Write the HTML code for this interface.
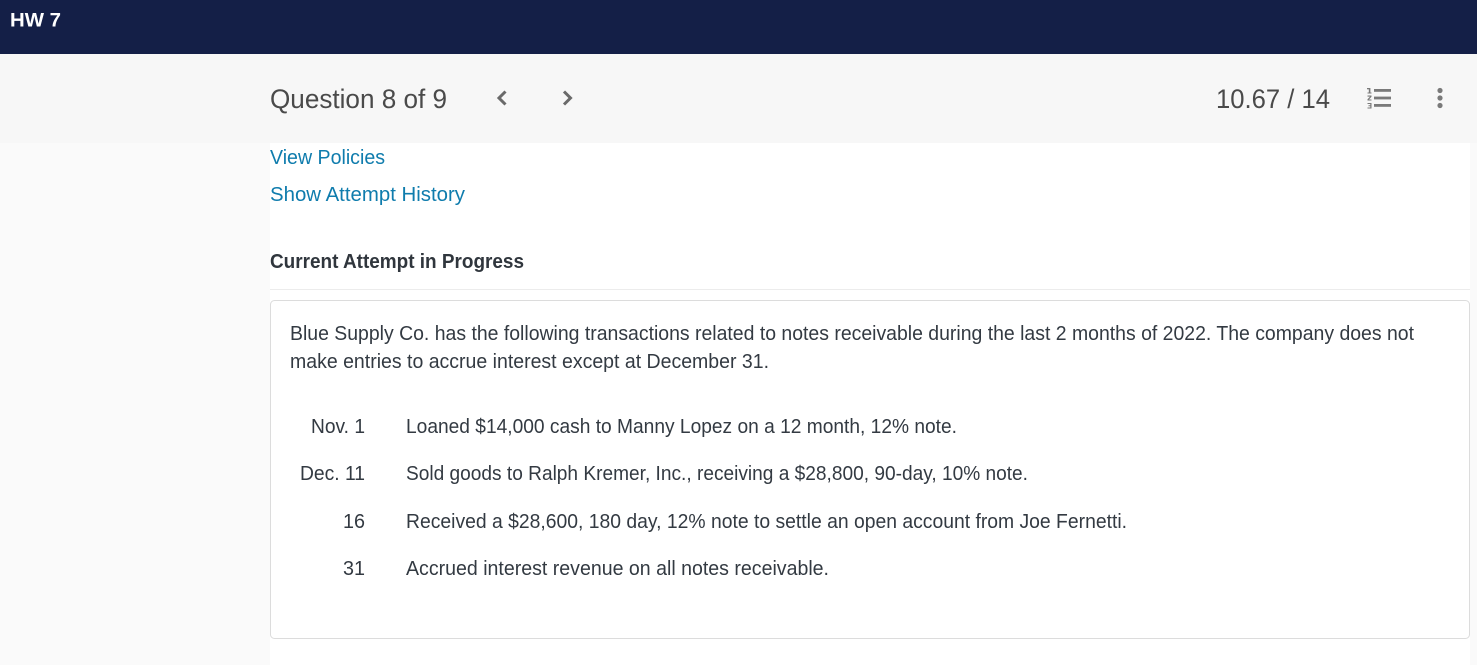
<!DOCTYPE html>
<html>
<head>
<meta charset="utf-8">
<title>HW 7</title>
<style>
html,body{margin:0;padding:0;background:#fafafa;}
body{width:1477px;height:665px;overflow:hidden;position:relative;}
svg{position:absolute;left:0;top:0;display:block;}
text{font-family:"Liberation Sans",sans-serif;}
</style>
</head>
<body>
<svg width="1477" height="665" viewBox="0 0 1477 665" xmlns="http://www.w3.org/2000/svg">
  <rect x="0" y="0" width="1477" height="665" fill="#fafafa"/>
  <rect x="270" y="143" width="1200" height="522" fill="#ffffff"/>
  <rect x="0" y="54" width="1477" height="89" fill="#f7f7f7"/>
  <rect x="0" y="0" width="1477" height="54" fill="#141f47"/>

  <text x="10" y="26.5" font-size="19" font-weight="700" fill="#ffffff" textLength="51" lengthAdjust="spacingAndGlyphs">HW 7</text>

  <text x="270" y="108" font-size="27" fill="#4a4a4a" textLength="177" lengthAdjust="spacingAndGlyphs">Question 8 of 9</text>
  <path d="M505.5 91.5 L499 98 L505.5 104.5" fill="none" stroke="#6a6a6a" stroke-width="3"/>
  <path d="M564 91.5 L570.5 98 L564 104.5" fill="none" stroke="#6a6a6a" stroke-width="3"/>

  <text x="1216" y="108" font-size="27" fill="#4a4a4a" textLength="114" lengthAdjust="spacingAndGlyphs">10.67 / 14</text>

  <g fill="#7a7a7a">
    <rect x="1374" y="89" width="17" height="2.8"/>
    <rect x="1374" y="96.6" width="17" height="2.8"/>
    <rect x="1374" y="104" width="17" height="2.8"/>
    <rect x="1368.8" y="88" width="1.6" height="5"/>
    <rect x="1367" y="88" width="2" height="1.3"/>
    <rect x="1367.5" y="92.5" width="4" height="1"/>
    <path d="M1367.5 95.5 H1371.5 V96.8 L1369 99.5 H1371.5 V100.5 H1367.5 V99.3 L1370 96.6 H1367.5 Z"/>
    <path d="M1367.5 103 H1371.5 V108.5 H1367.5 V107.5 H1370.3 V106.2 H1368.5 V105.2 H1370.3 V104 H1367.5 Z"/>
    <circle cx="1440" cy="90.5" r="2.6"/>
    <circle cx="1440" cy="98" r="2.6"/>
    <circle cx="1440" cy="105.5" r="2.6"/>
  </g>

  <text x="270" y="164" font-size="20" fill="#0f7cad" textLength="115" lengthAdjust="spacingAndGlyphs">View Policies</text>
  <text x="270" y="201" font-size="20" fill="#0f7cad" textLength="195" lengthAdjust="spacingAndGlyphs">Show Attempt History</text>

  <text x="270" y="268" font-size="20" font-weight="700" fill="#30363d" textLength="254" lengthAdjust="spacingAndGlyphs">Current Attempt in Progress</text>
  <rect x="270" y="289" width="1200" height="1" fill="#ececec"/>

  <rect x="270.5" y="300.5" width="1199" height="338" rx="4" ry="4" fill="#ffffff" stroke="#dcdcdc" stroke-width="1"/>

  <g font-size="20" fill="#333a42">
    <text x="290" y="340" textLength="1124" lengthAdjust="spacingAndGlyphs">Blue Supply Co. has the following transactions related to notes receivable during the last 2 months of 2022. The company does not</text>
    <text x="290" y="368" textLength="479" lengthAdjust="spacingAndGlyphs">make entries to accrue interest except at December 31.</text>

    <text x="311" y="433" textLength="54" lengthAdjust="spacingAndGlyphs">Nov. 1</text>
    <text x="300" y="480" textLength="65" lengthAdjust="spacingAndGlyphs">Dec. 11</text>
    <text x="343" y="528" textLength="22" lengthAdjust="spacingAndGlyphs">16</text>
    <text x="343" y="575" textLength="22" lengthAdjust="spacingAndGlyphs">31</text>

    <text x="406" y="433" textLength="551" lengthAdjust="spacingAndGlyphs">Loaned $14,000 cash to Manny Lopez on a 12 month, 12% note.</text>
    <text x="406" y="480" textLength="622" lengthAdjust="spacingAndGlyphs">Sold goods to Ralph Kremer, Inc., receiving a $28,800, 90-day, 10% note.</text>
    <text x="406" y="528" textLength="721" lengthAdjust="spacingAndGlyphs">Received a $28,600, 180 day, 12% note to settle an open account from Joe Fernetti.</text>
    <text x="406" y="575" textLength="423" lengthAdjust="spacingAndGlyphs">Accrued interest revenue on all notes receivable.</text>
  </g>
</svg>
</body>
</html>
